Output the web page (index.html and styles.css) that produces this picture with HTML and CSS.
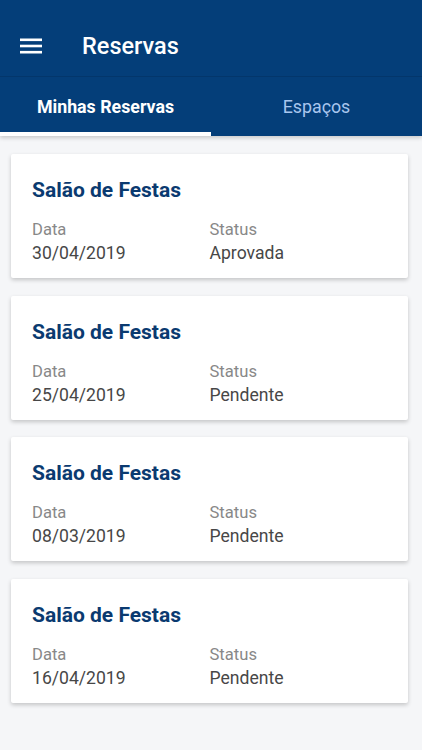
FILE: index.html
```html
<!DOCTYPE html>
<html>
<head lang="pt">
    <meta charset="UTF-8">
    <title>Reservas</title>
    <link rel="stylesheet" href="styles.css">
</head>
<body>
    <header class="topbar">
        <div class="toolbar">
            <a href="javascript:void(0);" class="menu">
                <svg width="22" height="18" viewBox="0 0 22 18">
                    <rect x="0" y="1.5" width="22" height="2.6" fill="#ffffff"/>
                    <rect x="0" y="7.7" width="22" height="2.6" fill="#ffffff"/>
                    <rect x="0" y="13.9" width="22" height="2.6" fill="#ffffff"/>
                </svg>
            </a>
            <h1 class="title">Reservas</h1>
        </div>
        <nav class="tabs">
            <a href="javascript:void(0);" class="tab active">Minhas Reservas</a>
            <a href="javascript:void(0);" class="tab">Espaços</a>
        </nav>
    </header>
    <ul class="list">
        <li class="card">
            <div class="card-tit">Salão de Festas</div>
            <div class="info">
                <div class="col">
                    <span class="label">Data</span>
                    <span class="value">30/04/2019</span>
                </div>
                <div class="col">
                    <span class="label">Status</span>
                    <span class="value">Aprovada</span>
                </div>
            </div>
        </li>
        <li class="card">
            <div class="card-tit">Salão de Festas</div>
            <div class="info">
                <div class="col">
                    <span class="label">Data</span>
                    <span class="value">25/04/2019</span>
                </div>
                <div class="col">
                    <span class="label">Status</span>
                    <span class="value">Pendente</span>
                </div>
            </div>
        </li>
        <li class="card">
            <div class="card-tit">Salão de Festas</div>
            <div class="info">
                <div class="col">
                    <span class="label">Data</span>
                    <span class="value">08/03/2019</span>
                </div>
                <div class="col">
                    <span class="label">Status</span>
                    <span class="value">Pendente</span>
                </div>
            </div>
        </li>
        <li class="card">
            <div class="card-tit">Salão de Festas</div>
            <div class="info">
                <div class="col">
                    <span class="label">Data</span>
                    <span class="value">16/04/2019</span>
                </div>
                <div class="col">
                    <span class="label">Status</span>
                    <span class="value">Pendente</span>
                </div>
            </div>
        </li>
    </ul>
</body>
</html>
```

FILE: styles.css
```css
body{
    margin: 0;
    font-family: Roboto, "Liberation Sans", sans-serif;
    background-color: #f5f6f8;
    color: #444444;
}
ul{
    margin: 0;
    padding: 0;
    list-style-type: none;
}
a{
    text-decoration: none;
}
.topbar{
    background-color: #043e79;
    box-shadow: 0 2px 4px rgba(0,0,0,0.18);
}
.toolbar{
    height: 77px;
    box-sizing: border-box;
    padding-top: 16px;
    display: flex;
    align-items: center;
    border-bottom: 1px solid #03366b;
}
.menu{
    display: flex;
    margin-left: 20px;
    width: 22px;
}
.title{
    margin: 0 0 0 40px;
    font-size: 23.5px;
    font-weight: 500;
    color: #ffffff;
}
.tabs{
    display: flex;
    height: 59px;
}
.tab{
    flex: 1;
    display: flex;
    align-items: center;
    justify-content: center;
    font-size: 17.8px;
    color: #a9c6ee;
    box-sizing: border-box;
}
.tab.active{
    color: #ffffff;
    font-weight: bold;
    border-bottom: 4px solid #ffffff;
    padding-top: 4px;
}
.list{
    padding: 18px 14px 18px 11px;
    display: flex;
    flex-direction: column;
    gap: 17.5px;
}
.card{
    background-color: #ffffff;
    height: 124px;
    box-sizing: border-box;
    padding: 23px 21px 0;
    border-radius: 2px;
    box-shadow: 0 2px 4px rgba(0,0,0,0.2);
}
.card-tit{
    font-size: 21px;
    font-weight: bold;
    color: #0a3a70;
    line-height: 26px;
}
.info{
    display: flex;
    margin-top: 16px;
}
.col{
    width: 178px;
    display: flex;
    flex-direction: column;
}
.label{
    font-size: 16.6px;
    line-height: 22px;
    color: #888888;
}
.value{
    font-size: 17.6px;
    line-height: 24px;
    color: #474747;
}
```
